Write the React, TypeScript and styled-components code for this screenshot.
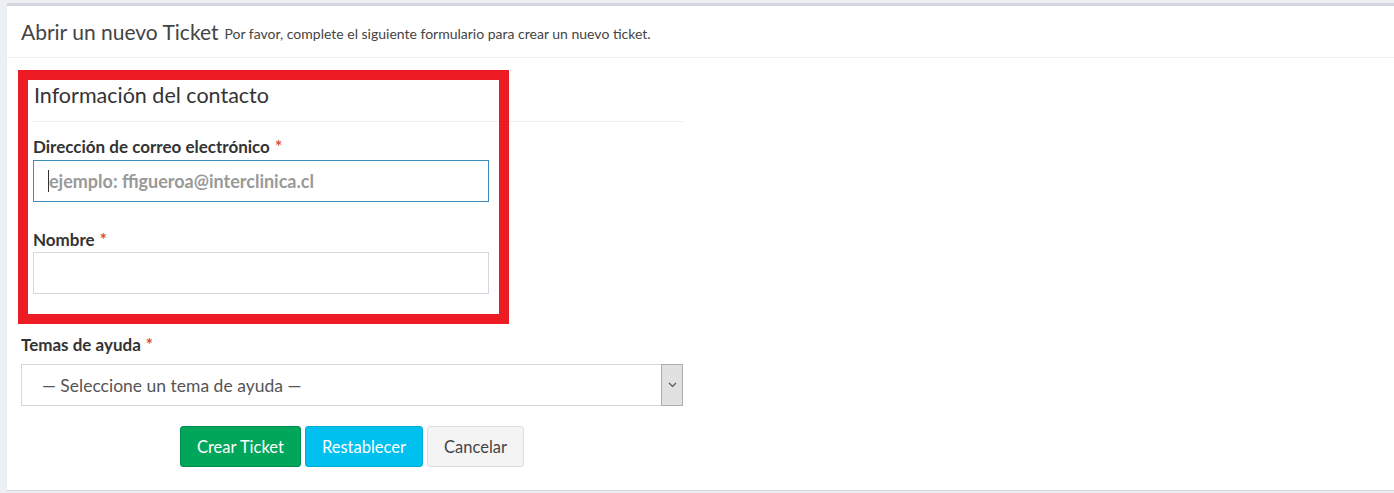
import styled, { createGlobalStyle } from 'styled-components'

const GlobalStyle = createGlobalStyle`
  body {
    margin: 0;
    background: #ecf0f5;
    font-family: Lato, "Liberation Sans", sans-serif;
    color: #333;
  }
`

const Page = styled.div`
  padding: 3px 0 2px 7px;
`

const Card = styled.div`
  background: #fff;
  border-top: 3px solid #d2d6de;
  box-shadow: 0 1px 1px rgba(0, 0, 0, 0.1);
`

const Header = styled.div`
  height: 51px;
  padding: 0 14px;
  display: flex;
  align-items: center;
  gap: 6px;
  border-bottom: 1px solid #f0f0f0;
`

const Title = styled.h3`
  margin: 0;
  font-size: 21px;
  font-weight: 400;
  color: #444;
`

const Subtitle = styled.small`
  font-size: 14px;
  color: #444;
  padding-top: 4px;
`

const Body = styled.div`
  padding: 22px 14px 23px;
`

const Form = styled.div`
  position: relative;
  width: 662px;
`

const Contact = styled.div`
  padding-left: 12px;
`

const SectionTitle = styled.h4`
  margin: 0 -12px 0 0;
  padding: 0 0 11px 1px;
  font-size: 21.5px;
  line-height: 30px;
  font-weight: 400;
  color: #333;
  border-bottom: 1px solid #eee;
  width: 650px;
`

const Label = styled.label<{ top: number; bottom: number }>`
  display: block;
  margin-top: ${({ top }) => top}px;
  margin-bottom: ${({ bottom }) => bottom}px;
  font-size: 17px;
  line-height: 22px;
  font-weight: 700;
  color: #333;
`

const Star = styled.span`
  color: #dd4b39;
  margin-left: 5px;
`

const InputWrap = styled.div`
  position: relative;
  width: 456px;
`

const Input = styled.input<{ focused?: boolean }>`
  display: block;
  box-sizing: border-box;
  width: 456px;
  height: 42px;
  padding: 0 15px;
  border: 1px solid ${({ focused }) => (focused ? '#3c8dbc' : '#d2d6de')};
  border-radius: 0;
  font-family: inherit;
  font-size: 18px;
  outline: none;
  &::placeholder {
    color: #999;
    font-weight: 700;
  }
`

const Caret = styled.span`
  position: absolute;
  left: 15px;
  top: 10px;
  width: 1px;
  height: 22px;
  background: #333;
`

const Select = styled.div`
  display: flex;
  box-sizing: border-box;
  height: 42px;
  border: 1px solid #d2d6de;
`

const SelectText = styled.div`
  flex: 1;
  display: flex;
  align-items: center;
  padding-left: 20px;
  font-size: 17.5px;
  color: #555;
`

const ArrowBox = styled.div`
  width: 20px;
  display: flex;
  align-items: center;
  justify-content: center;
  background: #e1e1e1;
  border: 1px solid #adadad;
  margin: -1px -1px -1px 0;
`

const Actions = styled.div`
  display: flex;
  justify-content: center;
  gap: 4px;
  margin-top: 20px;
`

const Button = styled.button<{ bg: string; bd: string; c: string }>`
  height: 41px;
  padding: 0 16px;
  border-radius: 3px;
  border: 1px solid ${({ bd }) => bd};
  background: ${({ bg }) => bg};
  color: ${({ c }) => c};
  font-family: inherit;
  font-size: 16.5px;
`

const Highlight = styled.div`
  position: absolute;
  left: -3px;
  top: -10px;
  width: 491px;
  height: 254px;
  box-sizing: border-box;
  border: 10px solid #ed1c24;
  pointer-events: none;
`

export default function App() {
  return (
    <Page>
      <GlobalStyle />
      <Card>
        <Header>
          <Title>Abrir un nuevo Ticket</Title>
          <Subtitle>Por favor, complete el siguiente formulario para crear un nuevo ticket.</Subtitle>
        </Header>
        <Body>
          <Form>
            <Contact>
              <SectionTitle>Información del contacto</SectionTitle>
              <Label top={14} bottom={2}>
                Dirección de correo electrónico<Star>*</Star>
              </Label>
              <InputWrap>
                <Input focused placeholder="ejemplo: ffigueroa@interclinica.cl" />
                <Caret />
              </InputWrap>
              <Label top={27} bottom={1}>
                Nombre<Star>*</Star>
              </Label>
              <Input />
            </Contact>
            <Label top={40} bottom={8}>
              Temas de ayuda<Star>*</Star>
            </Label>
            <Select>
              <SelectText>— Seleccione un tema de ayuda —</SelectText>
              <ArrowBox>
                <svg width="9" height="6" viewBox="0 0 9 6">
                  <path d="M1 1l3.5 3.5L8 1" fill="none" stroke="#555" strokeWidth="1.2" />
                </svg>
              </ArrowBox>
            </Select>
            <Actions>
              <Button bg="#00a65a" bd="#008d4c" c="#fff">Crear Ticket</Button>
              <Button bg="#00c0ef" bd="#00acd6" c="#fff">Restablecer</Button>
              <Button bg="#f4f4f4" bd="#ddd" c="#444">Cancelar</Button>
            </Actions>
            <Highlight />
          </Form>
        </Body>
      </Card>
    </Page>
  )
}
